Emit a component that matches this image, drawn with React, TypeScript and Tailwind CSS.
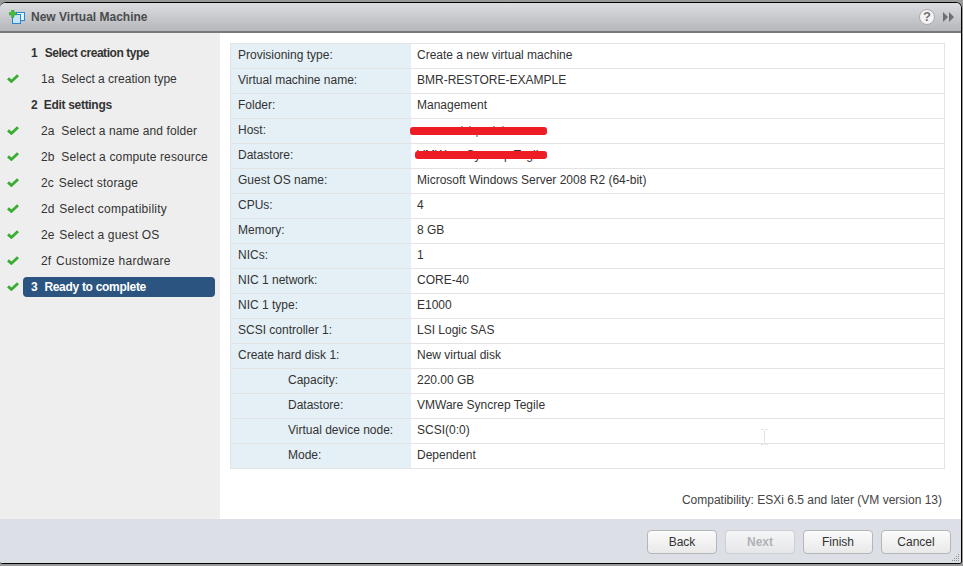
import React from "react";

type Step = { n: string; t: string; check?: boolean; head?: boolean; ml: string; gap: string; track: string };

const steps: Step[] = [
  { n: "1", t: "Select creation type", head: true, ml: "ml-[31px]", gap: "ml-[7px]", track: "tracking-[-0.45px]" },
  { n: "1a", t: "Select a creation type", check: true, ml: "ml-[41px]", gap: "ml-[7px]", track: "tracking-[0px]" },
  { n: "2", t: "Edit settings", head: true, ml: "ml-[31px]", gap: "ml-[6px]", track: "tracking-[-0.3px]" },
  { n: "2a", t: "Select a name and folder", check: true, ml: "ml-[41px]", gap: "ml-[7px]", track: "tracking-[0.1px]" },
  { n: "2b", t: "Select a compute resource", check: true, ml: "ml-[41px]", gap: "ml-[7px]", track: "tracking-[0.15px]" },
  { n: "2c", t: "Select storage", check: true, ml: "ml-[41px]", gap: "ml-[5px]", track: "tracking-[0.2px]" },
  { n: "2d", t: "Select compatibility", check: true, ml: "ml-[41px]", gap: "ml-[5px]", track: "tracking-[0.25px]" },
  { n: "2e", t: "Select a guest OS", check: true, ml: "ml-[41px]", gap: "ml-[5px]", track: "tracking-[0.2px]" },
  { n: "2f", t: "Customize hardware", check: true, ml: "ml-[41px]", gap: "ml-[5px]", track: "tracking-[0.25px]" },
];

const rows: [string, string, boolean?][] = [
  ["Provisioning type:", "Create a new virtual machine"],
  ["Virtual machine name:", "BMR-RESTORE-EXAMPLE"],
  ["Folder:", "Management"],
  ["Host:", ""],
  ["Datastore:", "VMWare Syncrep Tegile"],
  ["Guest OS name:", "Microsoft Windows Server 2008 R2 (64-bit)"],
  ["CPUs:", "4"],
  ["Memory:", "8 GB"],
  ["NICs:", "1"],
  ["NIC 1 network:", "CORE-40"],
  ["NIC 1 type:", "E1000"],
  ["SCSI controller 1:", "LSI Logic SAS"],
  ["Create hard disk 1:", "New virtual disk"],
  ["Capacity:", "220.00 GB", true],
  ["Datastore:", "VMWare Syncrep Tegile", true],
  ["Virtual device node:", "SCSI(0:0)", true],
  ["Mode:", "Dependent", true],
];

function Check() {
  return (
    <svg width="12" height="9" viewBox="0 0 12 9" className="block">
      <path d="M1 4.4 L4.4 7.4 L11 1.2" fill="none" stroke="#38ad30" strokeWidth="2.8" />
    </svg>
  );
}

function Btn({ label, disabled }: { label: string; disabled?: boolean }) {
  return (
    <div
      className={
        "w-[70px] h-[24px] rounded-[4px] border flex items-center justify-center text-[12px] bg-gradient-to-b from-[#fbfbfb] to-[#e9e9e9] " +
        (disabled ? "border-[#c9cccf] text-[#a5a8ab] font-bold opacity-80" : "border-[#b4b6b8] text-[#333333]")
      }
    >
      {label}
    </div>
  );
}

export default function App() {
  return (
    <div className="w-[963px] h-[566px] bg-[#9a9a9a] overflow-hidden pt-[2px] font-['Liberation_Sans',Arial,sans-serif]">
      <div className="w-[962px] h-[562px] rounded-t-[6px] rounded-b-[3px] border-r border-b border-t border-black flex flex-col bg-white overflow-hidden relative">
        <header className="h-[30px] shrink-0 border-b-2 border-[#77797b] bg-gradient-to-b from-[#dcdde0] to-[#b5b7ba] flex items-center pl-[9px] pr-[7px]">
          <svg width="17" height="15" viewBox="0 0 17 15" className="shrink-0">
            <rect x="7.5" y="2.5" width="8" height="8" fill="#e8f4fb" stroke="#2487dc" />
            <rect x="3.5" y="4.5" width="8" height="9" fill="#c9e6f8" stroke="#2487dc" />
            <path d="M2.5 0 H5 V2.5 H7.5 V5 H5 V7.5 H2.5 V5 H0 V2.5 H2.5 Z" fill="#3fbf3a" stroke="#2d8f2a" strokeWidth="0.4" />
          </svg>
          <span className="ml-[5px] text-[12px] font-bold text-[#4a4c4e]">New Virtual Machine</span>
          <div className="ml-auto w-[16px] h-[16px] rounded-full bg-[#f4f4f4] border border-[#a9aaac] flex items-center justify-center text-[13px] font-bold text-[#707274]">?</div>
          <svg width="11" height="10" viewBox="0 0 11 10" className="ml-[8px]">
            <path d="M0 0 L5 5 L0 10 Z M6 0 L11 5 L6 10 Z" fill="#6d6f72" />
          </svg>
        </header>
        <div className="flex-1 flex min-h-0">
          <aside className="w-[220px] shrink-0 bg-[#eeeeee] pt-[7px] text-[12px] text-[#333333]">
            {steps.map((s) => (
              <div key={s.n} className="h-[26px] relative flex items-center">
                {s.check && (
                  <span className="absolute left-[7px] top-[8px]">
                    <Check />
                  </span>
                )}
                <span className={s.ml + (s.head ? " font-bold" : "")}>{s.n}</span>
                <span className={s.gap + " " + s.track + (s.head ? " font-bold" : "")}>{s.t}</span>
              </div>
            ))}
            <div className="h-[26px] relative flex items-center">
              <span className="absolute left-[7px] top-[8px]">
                <Check />
              </span>
              <div className="ml-[23px] w-[192px] h-[20px] rounded-[4px] bg-[#2b5580] text-white font-bold flex items-center pl-[8px] tracking-[-0.3px]">
                <span>3</span>
                <span className="ml-[7px]">Ready to complete</span>
              </div>
            </div>
          </aside>
          <main className="flex-1 min-w-0 pt-[10px] pl-[10px] pr-[16px] flex flex-col text-[12px] text-[#333333] relative">
            <div className="w-[715px] border border-[#e3e3e3] border-b-0">
              {rows.map(([k, v, sub], i) => (
                <div key={i} className="h-[25px] flex border-b border-[#e3e3e3] relative">
                  <div className={"w-[180px] shrink-0 bg-[#e4eff6] flex items-center pb-[2px] " + (sub ? "pl-[57px]" : "pl-[7px]")}>{k}</div>
                  <div className="flex-1 flex items-center pb-[2px] pl-[6px]">{v}</div>
                  {k === "Host:" && (
                    <svg width="140" height="14" viewBox="0 0 140 14" className="absolute left-[179px] top-[5px]">
                      <path d="M52 2v2M60 2v2M84 2v2M93 2v2M67 11v2" stroke="#555555" strokeWidth="1" />
                      <rect x="0" y="3" width="137" height="8" rx="3" fill="#ee1c25" />
                    </svg>
                  )}
                  {k === "Datastore:" && !sub && (
                    <div className="absolute left-[184px] top-[7px] w-[132px] h-[8px] rounded-[3px] bg-[#ee1c25]" />
                  )}
                </div>
              ))}
            </div>
            <svg width="7" height="16" viewBox="0 0 7 16" className="absolute left-[541px] top-[396px]">
              <path d="M0 .5h2.5M4.5 .5h2.5M3.5 1v14M0 15.5h2.5M4.5 15.5h2.5" stroke="#e2e2e2" fill="none" />
            </svg>
            <div className="mt-auto mb-[10px] pr-[3px] text-right text-[#444444]">Compatibility: ESXi 6.5 and later (VM version 13)</div>
          </main>
        </div>
        <footer className="h-[44px] shrink-0 bg-[#dcdfe6] flex items-start justify-end gap-[8px] pt-[11px] pr-[10px] relative">
          <Btn label="Back" />
          <Btn label="Next" disabled />
          <Btn label="Finish" />
          <Btn label="Cancel" />
          <svg width="9" height="9" viewBox="0 0 9 9" className="absolute right-[1px] bottom-[1px]">
            <path d="M7 1h1v1H7zM5 3h1v1H5zM7 3h1v1H7zM3 5h1v1H3zM5 5h1v1H5zM7 5h1v1H7zM1 7h1v1H1zM3 7h1v1H3zM5 7h1v1H5zM7 7h1v1H7z" fill="#8d8f92" />
          </svg>
        </footer>
      </div>
    </div>
  );
}
